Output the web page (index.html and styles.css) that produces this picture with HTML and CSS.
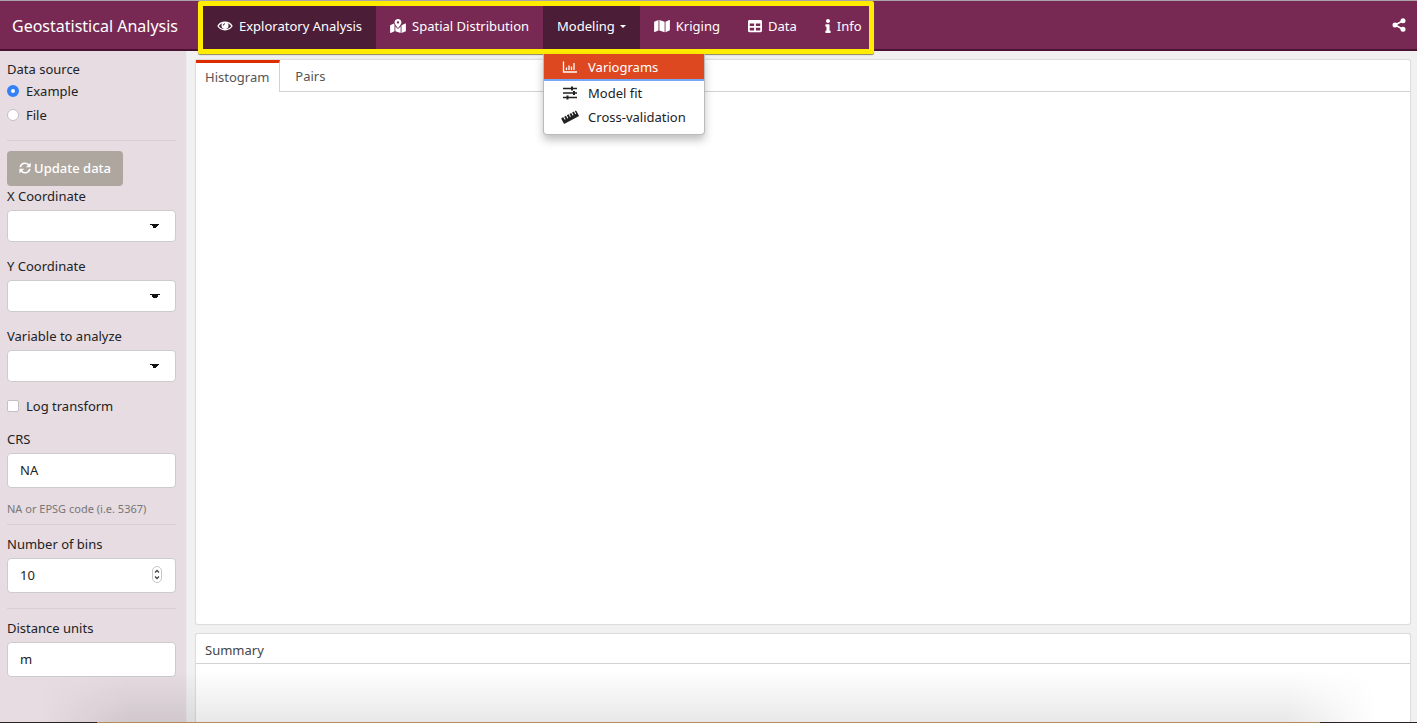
FILE: index.html
```html
<!DOCTYPE html>
<html lang="en">
<head>
<meta charset="utf-8">
<meta name="viewport" content="width=device-width, initial-scale=1">
<title>Geostatistical Analysis</title>
<link rel="stylesheet" href="styles.css">
</head>
<body>
<header class="navbar">
  <a class="brand" href="#">Geostatistical Analysis</a>
  <nav class="nav">
    <a class="nav-item active" href="#"><svg class="icon" width="16" height="14" viewBox="0 0 32 28" aria-hidden="true"><path d="M2 14C8 4 24 4 30 14C24 24 8 24 2 14Z" fill="none" stroke="currentColor" stroke-width="2.6"/><circle cx="16" cy="13" r="7" fill="currentColor"/><path d="M12.500 13a3.500 3.500 0 0 1 3.500-3.500" fill="none" stroke="#4c1d37" stroke-width="2"/></svg>Exploratory Analysis</a>
    <a class="nav-item" href="#"><svg class="icon" width="16" height="14" viewBox="0 0 576 512" aria-hidden="true"><path fill="currentColor" d="M288 0c-69.59 0-126 56.41-126 126 0 56.26 82.35 158.8 113.9 196.02 6.39 7.54 17.82 7.54 24.2 0C331.65 284.8 414 182.26 414 126 414 56.41 357.59 0 288 0zm0 168c-23.2 0-42-18.8-42-42s18.8-42 42-42 42 18.8 42 42-18.8 42-42 42zM20.12 215.95A32.006 32.006 0 0 0 0 245.66v250.32c0 11.32 11.43 19.06 21.94 14.86L160 448V214.92c-8.84-15.98-16.07-31.54-21.25-46.42L20.12 215.95zM288 359.67c-14.07 0-27.38-6.18-36.51-16.96-19.66-23.2-40.57-49.62-59.49-76.72v182l192 64V266c-18.92 27.09-39.82 53.52-59.49 76.72-9.13 10.77-22.44 16.95-36.51 16.95zm266.06-198.51L416 224v288l139.88-55.95A31.996 31.996 0 0 0 576 426.34V176.02c0-11.32-11.43-19.06-21.94-14.86z"/></svg>Spatial Distribution</a>
    <div class="dropdown">
      <button class="nav-item active toggle" type="button" aria-expanded="true">Modeling<span class="caret"></span></button>
      <div class="menu">
        <a class="menu-item selected" href="#"><svg class="menu-icon" width="16" height="14" viewBox="0 0 32 28" aria-hidden="true"><path d="M3 3V24H30M9 20v-5M14 20V11M19 20v-7M24 20V6" fill="none" stroke="currentColor" stroke-width="2.600"/></svg>Variograms</a>
        <a class="menu-item" href="#"><svg class="menu-icon" width="16" height="14" viewBox="0 0 32 28" aria-hidden="true"><path d="M2 5H30M2 14H30M2 23H30" stroke="currentColor" stroke-width="2.600"/><path d="M20 1V9M24 10V18M11 19V27" stroke="currentColor" stroke-width="4"/></svg>Model fit</a>
        <a class="menu-item" href="#"><svg class="menu-icon" width="18" height="14" viewBox="0 0 36 28" aria-hidden="true"><g transform="rotate(-28 18 14)"><path fill="currentColor" d="M3 8h3v6h2V8h4v6h2V8h4v6h2V8h4v6h2V8h4v6h2V8h1q2 0 2 2v9q0 2-2 2H3q-2 0-2-2v-9q0-2 2-2z"/></g></svg>Cross-validation</a>
      </div>
    </div>
    <a class="nav-item" href="#"><svg class="icon" width="16" height="14" viewBox="0 0 576 512" aria-hidden="true"><path fill="currentColor" d="M0 117.66v346.32c0 11.32 11.43 19.06 21.94 14.86L160 416V32L20.12 87.95A32.006 32.006 0 0 0 0 117.66zM192 416l192 64V96L192 32v384zM554.06 33.16L416 96v384l139.88-55.95A31.996 31.996 0 0 0 576 394.34V48.02c0-11.32-11.43-19.06-21.94-14.86z"/></svg>Kriging</a>
    <a class="nav-item" href="#"><svg class="icon" width="14" height="14" viewBox="0 0 512 512" aria-hidden="true"><path fill="currentColor" d="M464 32H48C21.490 32 0 53.490 0 80v352c0 26.510 21.490 48 48 48h416c26.510 0 48-21.490 48-48V80c0-26.510-21.490-48-48-48zM224 416H64v-96h160v96zm0-160H64v-96h160v96zm224 160H288v-96h160v96zm0-160H288v-96h160v96z"/></svg>Data</a>
    <a class="nav-item" href="#"><svg class="icon" width="6" height="14" viewBox="0 0 192 512" aria-hidden="true"><path fill="currentColor" d="M20 424.229h20V279.771H20c-11.046 0-20-8.954-20-20V212c0-11.046 8.954-20 20-20h112c11.046 0 20 8.954 20 20v212.229h20c11.046 0 20 8.954 20 20V492c0 11.046-8.954 20-20 20H20c-11.046 0-20-8.954-20-20v-47.771c0-11.046 8.954-20 20-20zM96 0C56.235 0 24 32.235 24 72s32.235 72 72 72 72-32.235 72-72S135.764 0 96 0z"/></svg>Info</a>
  </nav>
  <a class="share" href="#" aria-label="Share"><svg width="14" height="14" viewBox="0 0 28 28" aria-hidden="true"><path d="M22 5.500L6 14L22 22.500" fill="none" stroke="currentColor" stroke-width="3"/><g fill="currentColor"><circle cx="22" cy="5.500" r="5"/><circle cx="6" cy="14" r="5"/><circle cx="22" cy="22.500" r="5"/></g></svg></a>
</header>
<div class="page">
  <form class="sidebar">
    <fieldset class="source">
      <legend>Data source</legend>
      <label class="choice"><input type="radio" name="source" checked>Example</label>
      <label class="choice"><input type="radio" name="source">File</label>
    </fieldset>
    <hr>
    <button class="update" type="button"><svg width="14" height="14" viewBox="0 0 28 28" aria-hidden="true"><g fill="none" stroke="currentColor" stroke-width="3.600"><path d="M3 12C5 2 18 0 23 8"/><path d="M25 16C23 26 10 28 5 20"/></g><path fill="currentColor" d="M27 1V12H16zM1 27V16H12z"/></svg>Update data</button>
    <div class="field"><label for="x">X Coordinate</label><select id="x"><option></option></select></div>
    <div class="field"><label for="y">Y Coordinate</label><select id="y"><option></option></select></div>
    <div class="field"><label for="variable">Variable to analyze</label><select id="variable"><option></option></select></div>
    <label class="choice log"><input type="checkbox">Log transform</label>
    <div class="field"><label for="crs">CRS</label><input id="crs" type="text" value="NA"></div>
    <small class="help">NA or EPSG code (i.e. 5367)</small>
    <hr>
    <div class="field after-rule"><label for="bins">Number of bins</label>
      <div class="number"><input id="bins" type="number" value="10"><svg class="stepper" width="10" height="17" viewBox="0 0 20 34" aria-hidden="true"><rect x="1" y="1" width="18" height="32" rx="9" fill="#fff" stroke="#c6c6c6" stroke-width="2"/><path d="M6 13l4-4 4 4M6 21l4 4 4-4" fill="none" stroke="#444" stroke-width="2.600"/></svg></div>
    </div>
    <hr>
    <div class="field after-rule"><label for="units">Distance units</label><input id="units" type="text" value="m"></div>
  </form>
  <main class="content">
    <section class="panel plots">
      <div class="tabs" role="tablist">
        <button class="tab current" type="button" role="tab" aria-selected="true">Histogram</button>
        <button class="tab" type="button" role="tab" aria-selected="false">Pairs</button>
      </div>
    </section>
    <section class="panel summary"><h2>Summary</h2></section>
  </main>
</div>
<div class="window-shadow"></div>
<div class="window-edge"></div>
</body>
</html>
```
FILE: styles.css
```css
* { box-sizing: border-box; }
body {
  margin: 0;
  height: 100vh;
  display: flex;
  flex-direction: column;
  overflow: hidden;
  background: #f1f1f1;
  color: #222;
  font: 13px/20px "Noto Sans", "Open Sans", sans-serif;
}
a { color: inherit; text-decoration: none; }
button, input, select { font: inherit; color: inherit; }

.navbar {
  display: flex;
  align-items: center;
  flex: none;
  height: 51px;
  padding-right: 11px;
  background: #772953;
  border-top: 1px solid #aaa3a8;
  border-bottom: 2px solid #4b1133;
  color: #fff;
}
.brand { flex: none; width: 198px; padding: 2px 0 0 12px; font-size: 16px; white-space: nowrap; }
.nav {
  display: flex;
  align-self: flex-start;
  height: 53px;
  position: relative;
  z-index: 2;
  border: 5px solid #ffec00;
  border-radius: 2px;
  box-shadow: 0 1px 1px #8c8560;
  background: #772953;
}
.nav-item {
  display: flex;
  align-items: center;
  height: 43px;
  padding: 0 14px 3px;
  border: 0;
  background: none;
  white-space: nowrap;
}
.nav-item:last-child { padding-right: 7px; }
.nav-item.active { background: #4c1d37; }
.nav .icon { margin-right: 6px; }
.caret { margin-left: 5px; border: 3px solid transparent; border-top-color: #fff; border-bottom: 0; }
.dropdown { position: relative; }
.toggle { color: #fff; }
.menu {
  position: absolute;
  top: 48px;
  left: 0;
  width: 162px;
  height: 81px;
  background: #fff;
  border: 1px solid #bbb;
  border-top: 0;
  border-radius: 0 0 4px 4px;
  box-shadow: 0 5px 8px rgba(0, 0, 0, .25);
  color: #222;
}
.menu-item { display: flex; align-items: center; height: 24px; padding-left: 17px; }
.menu-item.selected { height: 27px; background: #dd4820; color: #fff; border-bottom: 2px solid #76a7f7; }
.menu-icon { flex: none; width: 18px; margin-right: 9px; }
.share { display: flex; margin-left: auto; }

.page { display: flex; flex: 1; min-height: 0; }
.sidebar {
  flex: none;
  width: 187px;
  padding: 8px 10px 0 7px;
  background: #e6dce2;
  border-right: 1px solid #ececec;
}
.source { margin: 0; padding: 0; border: 0; }
legend { padding: 0; }
.choice { display: flex; align-items: center; height: 24px; gap: 7px; }
.choice input {
  appearance: none;
  width: 12px;
  height: 12px;
  margin: 0;
  background: #fff;
  border: 1px solid #c5bfc3;
}
.choice input[type="radio"] { border-radius: 50%; }
.choice input[type="radio"]:checked { border: 4px solid #3480f7; }
.choice input[type="checkbox"] { border-radius: 2px; }
.choice.log { height: 20px; margin: 14px 0 13px; }
hr { margin: 0; border: 0; border-top: 1px solid #d6d0d4; }
.source + hr { margin: 13px 0 10px; }
.update {
  display: flex;
  align-items: center;
  gap: 3px;
  width: 116px;
  height: 35px;
  padding: 0 12px 1px;
  border: 0;
  border-radius: 4px;
  background: #aea79f;
  color: #fff;
  font-weight: 500;
  white-space: nowrap;
}
.field { display: flex; flex-direction: column; gap: 4px; }
.field + .field { margin-top: 14px; }
.field select, .field input {
  width: 100%;
  height: 35px;
  padding: 0 12px 1px;
  border: 1px solid #ccc;
  border-radius: 4px;
  background-color: #fff;
}
.field select {
  height: 32px;
  appearance: none;
  background-image: linear-gradient(to bottom left, #111 50%, transparent 50%), linear-gradient(to bottom right, #111 50%, transparent 50%);
  background-size: 5px 5px;
  background-position: right 20px center, right 15px center;
  background-repeat: no-repeat;
}
.help { display: block; margin-top: 11px; padding-bottom: 5px; font-size: 11px; line-height: 20px; color: #777; }
.after-rule { margin: 9px 0 15px; }
.number { position: relative; }
.number input { appearance: textfield; display: block; }
.stepper { position: absolute; top: 8px; right: 14px; }

.content { display: flex; flex: 1; flex-direction: column; gap: 8px; padding: 8px 6px 0 8px; min-width: 0; }
.panel { background: #fff; border: 1px solid #ddd; border-radius: 3px; box-shadow: 0 0 1px #ddd; }
.plots { flex: 1; }
.tabs { display: flex; height: 32px; border-bottom: 1px solid #d2d2d2; }
.tab { padding: 0 15px; border: 0; background: none; color: #555; }
.tab.current {
  height: 32px;
  padding: 0 10px 2px 9px;
  border-top: 3px solid #dd2c00;
  border-right: 1px solid #d2d2d2;
  background: #fff;
}
.summary { flex: none; height: 90px; border-bottom: 0; border-radius: 3px 3px 0 0; }
.summary h2 { margin: 0; padding: 6px 9px 3px; font-size: 13px; font-weight: 400; line-height: 20px; color: #444; border-bottom: 1px solid #d2d2d2; }

.window-shadow {
  position: fixed;
  left: 40px;
  right: 40px;
  bottom: 1px;
  height: 52px;
  background: linear-gradient(transparent, rgba(0, 0, 0, .09));
  mask-image: linear-gradient(to right, transparent, #000 90px, #000 calc(100% - 90px), transparent);
  pointer-events: none;
}
.window-edge {
  position: fixed;
  inset: auto 0 0;
  height: 1px;
  background: linear-gradient(to right, #2b2024 97px, #b48d5c 97px, #b48d5c calc(100% - 97px), #2b2024 calc(100% - 97px));
}
```
